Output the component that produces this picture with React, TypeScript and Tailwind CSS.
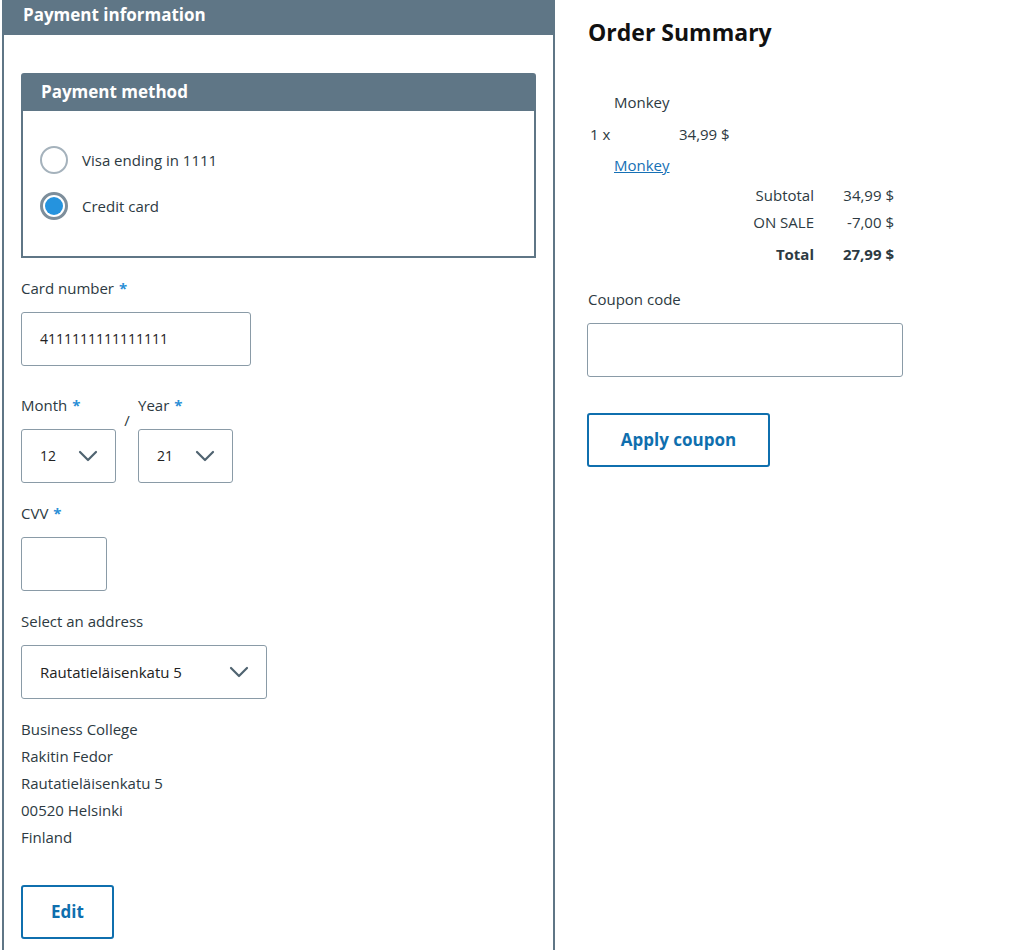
import React from "react";

const Chevron = () => (
  <svg width="20" height="12" viewBox="0 0 20 12" fill="none" stroke="#4f6370" strokeWidth="2.2" strokeLinecap="round" strokeLinejoin="round">
    <path d="M2 2l8 8 8-8" />
  </svg>
);

const Star = () => <span className="text-[#2b8fd6] font-bold ml-[5px]">*</span>;

export default function App() {
  return (
    <div className="w-[1030px] h-[950px] overflow-hidden bg-white text-[#2d3a42] text-[15px] leading-[22px]" style={{ fontFamily: "'Open Sans', 'Noto Sans', sans-serif" }}>
      <div className="flex items-start">
        <div className="ml-[2px] w-[553px] h-[960px] border-x-2 border-[#5f7686] flex flex-col">
          <div className="h-[35px] bg-[#5f7686] text-white font-bold text-[17px] pl-[19px] pt-[4px]">Payment information</div>
          <div className="px-[17px] pt-[38px] flex flex-col">
            <div className="border-2 border-[#5f7686] rounded-t-[3px]">
              <div className="h-[36px] bg-[#5f7686] text-white font-bold text-[17px] pl-[18px] pt-[6px]">Payment method</div>
              <div className="px-[17px] pt-[35px] pb-[36px] flex flex-col gap-[18px]">
                <label className="flex items-center gap-[14px]">
                  <span className="w-[28px] h-[28px] rounded-full border-2 border-[#a5b2bc] bg-white"></span>
                  <span>Visa ending in 1111</span>
                </label>
                <label className="flex items-center gap-[14px]">
                  <span className="w-[28px] h-[28px] rounded-full border-[3px] border-[#7d8e9b] bg-white flex items-center justify-center">
                    <span className="w-[18px] h-[18px] rounded-full bg-[#2593de]"></span>
                  </span>
                  <span>Credit card</span>
                </label>
              </div>
            </div>

            <div className="mt-[19px]">Card number<Star /></div>
            <div className="mt-[13px] w-[230px] h-[54px] border border-[#8a9ba7] rounded-[3px] flex items-center pl-[18px] text-[14px] text-[#222]">4111111111111111</div>

            <div className="mt-[28px] flex items-start">
              <div className="flex flex-col">
                <div>Month<Star /></div>
                <div className="mt-[13px] w-[95px] h-[54px] border border-[#8a9ba7] rounded-[3px] flex items-center justify-between pl-[18px] pr-[17px] text-[14px] text-[#222]">
                  <span>12</span><Chevron />
                </div>
              </div>
              <div className="w-[22px] text-center pt-[15px]">/</div>
              <div className="flex flex-col">
                <div>Year<Star /></div>
                <div className="mt-[13px] w-[95px] h-[54px] border border-[#8a9ba7] rounded-[3px] flex items-center justify-between pl-[18px] pr-[17px] text-[14px] text-[#222]">
                  <span>21</span><Chevron />
                </div>
              </div>
            </div>

            <div className="mt-[19px]">CVV<Star /></div>
            <div className="mt-[13px] w-[86px] h-[54px] border border-[#8a9ba7] rounded-[3px]"></div>

            <div className="mt-[19px]">Select an address</div>
            <div className="mt-[13px] w-[246px] h-[54px] border border-[#8a9ba7] rounded-[3px] flex items-center justify-between pl-[18px] pr-[17px] text-[#222]">
              <span>Rautatieläisenkatu 5</span><Chevron />
            </div>

            <div className="mt-[17px] leading-[27px]">
              <div>Business College</div>
              <div>Rakitin Fedor</div>
              <div>Rautatieläisenkatu 5</div>
              <div>00520 Helsinki</div>
              <div>Finland</div>
            </div>

            <button className="mt-[34px] w-[93px] h-[54px] border-2 border-[#0f6fae] rounded-[3px] text-[#0f6fae] font-bold text-[17px]">Edit</button>
          </div>
        </div>

        <div className="ml-[32px] flex flex-col">
          <div className="mt-[15px] ml-[1px] text-[23px] leading-[34px] font-bold text-[#111]">Order Summary</div>
          <div className="mt-[42px] pl-[27px]">Monkey</div>
          <div className="mt-[10px] flex ml-[3px]">
            <span className="w-[89px]">1 x</span>
            <span>34,99 $</span>
          </div>
          <a className="mt-[9px] ml-[27px] text-[#1670b5] underline">Monkey</a>
          <div className="mt-[8px] flex">
            <div className="w-[227px] text-right">Subtotal</div>
            <div className="w-[80px] text-right">34,99 $</div>
          </div>
          <div className="mt-[5px] flex">
            <div className="w-[227px] text-right">ON SALE</div>
            <div className="w-[80px] text-right">-7,00 $</div>
          </div>
          <div className="mt-[10px] flex font-bold">
            <div className="w-[227px] text-right">Total</div>
            <div className="w-[80px] text-right">27,99 $</div>
          </div>
          <div className="mt-[23px] ml-[1px]">Coupon code</div>
          <div className="mt-[13px] w-[316px] h-[54px] border border-[#8a9ba7] rounded-[3px]"></div>
          <button className="mt-[36px] w-[183px] h-[54px] border-2 border-[#0f6fae] rounded-[3px] text-[#0f6fae] font-bold text-[17px]">Apply coupon</button>
        </div>
      </div>
    </div>
  );
}
